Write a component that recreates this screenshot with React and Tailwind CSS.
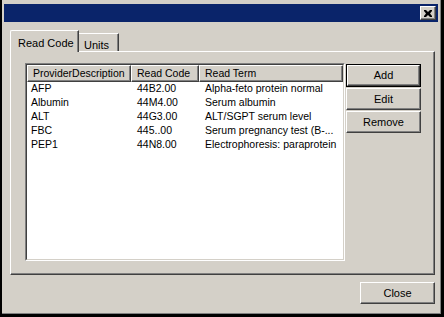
import React from "react";

const rows = [
  { desc: "AFP", code: "44B2.00", term: "Alpha-feto protein normal" },
  { desc: "Albumin", code: "44M4.00", term: "Serum albumin" },
  { desc: "ALT", code: "44G3.00", term: "ALT/SGPT serum level" },
  { desc: "FBC", code: "445..00", term: "Serum pregnancy test (B-..." },
  { desc: "PEP1", code: "44N8.00", term: "Electrophoresis: paraprotein" },
];

function Button({ label, isDefault = false, className = "" }) {
  if (isDefault) {
    return (
      <div className={`border border-black ${className}`}>
        <div className="h-full border-t border-l border-white border-r border-b border-r-[#404040] border-b-[#404040] shadow-[inset_-1px_-1px_0_#808080] flex items-center justify-center">
          {label}
        </div>
      </div>
    );
  }
  return (
    <div
      className={`border-t border-l border-white border-r border-b border-r-[#404040] border-b-[#404040] shadow-[inset_-1px_-1px_0_#808080] flex items-center justify-center ${className}`}
    >
      {label}
    </div>
  );
}

export default function App() {
  return (
    <div className="w-[444px] h-[317px] bg-black pl-[2px] pr-[3px] pb-[3px] flex font-['Liberation_Sans',Arial,sans-serif] text-[10.5px] text-black">
      <div className="flex-1 bg-[#d4d0c8] border-r border-b border-[#808080] px-[2px] pt-[4px] flex flex-col">
        {/* Title bar */}
        <div className="h-[18px] bg-[#0a246a] flex items-center justify-end pr-[2px]">
          <div className="w-[16px] h-[14px] bg-[#d4d0c8] border-t border-l border-white border-r border-b border-r-[#404040] border-b-[#404040] shadow-[inset_-1px_-1px_0_#808080] flex items-center justify-center">
            <svg width="8" height="7" viewBox="0 0 8 7">
              <path d="M0 0h2l2 2 2-2h2v1l-2 2.5 2 2.5v1h-2l-2-2-2 2h-2v-1l2-2.5-2-2.5z" fill="#000" />
            </svg>
          </div>
        </div>

        {/* Tabs */}
        <div className="ml-[6px] mt-[8px] flex items-end relative z-10 text-[11px]">
          <div className="w-[69px] h-[22px] -mb-px bg-[#d4d0c8] border-t border-l border-white border-r border-r-[#404040] rounded-tl-[2px] shadow-[inset_-1px_0_0_#808080] flex items-start pt-[4px] pl-[7px] whitespace-nowrap">
            Read Code
          </div>
          <div className="w-[40px] h-[18px] border-t border-white border-r border-r-[#404040] shadow-[inset_-1px_0_0_#808080] flex items-start pt-[3px] pl-[5px] whitespace-nowrap">
            Units
          </div>
        </div>

        {/* Panel */}
        <div className="ml-[6px] w-[425px] h-[224px] border-t border-l border-white border-r border-b border-r-[#404040] border-b-[#404040] shadow-[inset_-1px_-1px_0_#808080] pl-[14px] pt-[11px] flex">
          {/* List view */}
          <div className="w-[320px] h-[198px] border-t border-l border-[#808080] border-r border-b border-r-white border-b-white">
            <div className="h-full bg-white border-t border-l border-[#404040] border-r border-b border-r-[#d4d0c8] border-b-[#d4d0c8]">
              <div className="flex h-[17px] bg-[#d4d0c8]">
                <div className="w-[104px] border-t border-l border-white border-r border-b border-r-[#404040] border-b-[#404040] shadow-[inset_-1px_-1px_0_#808080] pl-[5px] flex items-center whitespace-nowrap overflow-hidden">
                  ProviderDescription
                </div>
                <div className="w-[68px] border-t border-l border-white border-r border-b border-r-[#404040] border-b-[#404040] shadow-[inset_-1px_-1px_0_#808080] pl-[5px] flex items-center whitespace-nowrap">
                  Read Code
                </div>
                <div className="flex-1 border-t border-l border-white border-r border-b border-r-[#404040] border-b-[#404040] shadow-[inset_-1px_-1px_0_#808080] pl-[5px] flex items-center">
                  Read Term
                </div>
              </div>
              {rows.map((r) => (
                <div key={r.desc} className="flex h-[14px] items-center">
                  <div className="w-[104px] pl-[4px]">{r.desc}</div>
                  <div className="w-[68px] pl-[6px]">{r.code}</div>
                  <div className="flex-1 pl-[6px] whitespace-nowrap">{r.term}</div>
                </div>
              ))}
            </div>
          </div>

          {/* Buttons */}
          <div className="ml-[1px] mt-[1px] w-[75px] flex flex-col gap-px text-[11px]">
            <Button label="Add" isDefault className="h-[23px]" />
            <Button label="Edit" className="h-[22px]" />
            <Button label="Remove" className="h-[22px]" />
          </div>
        </div>

        {/* Footer */}
        <div className="ml-[6px] w-[425px] mt-[7px] flex justify-end text-[11px]">
          <Button label="Close" className="w-[75px] h-[22px]" />
        </div>
      </div>
    </div>
  );
}
